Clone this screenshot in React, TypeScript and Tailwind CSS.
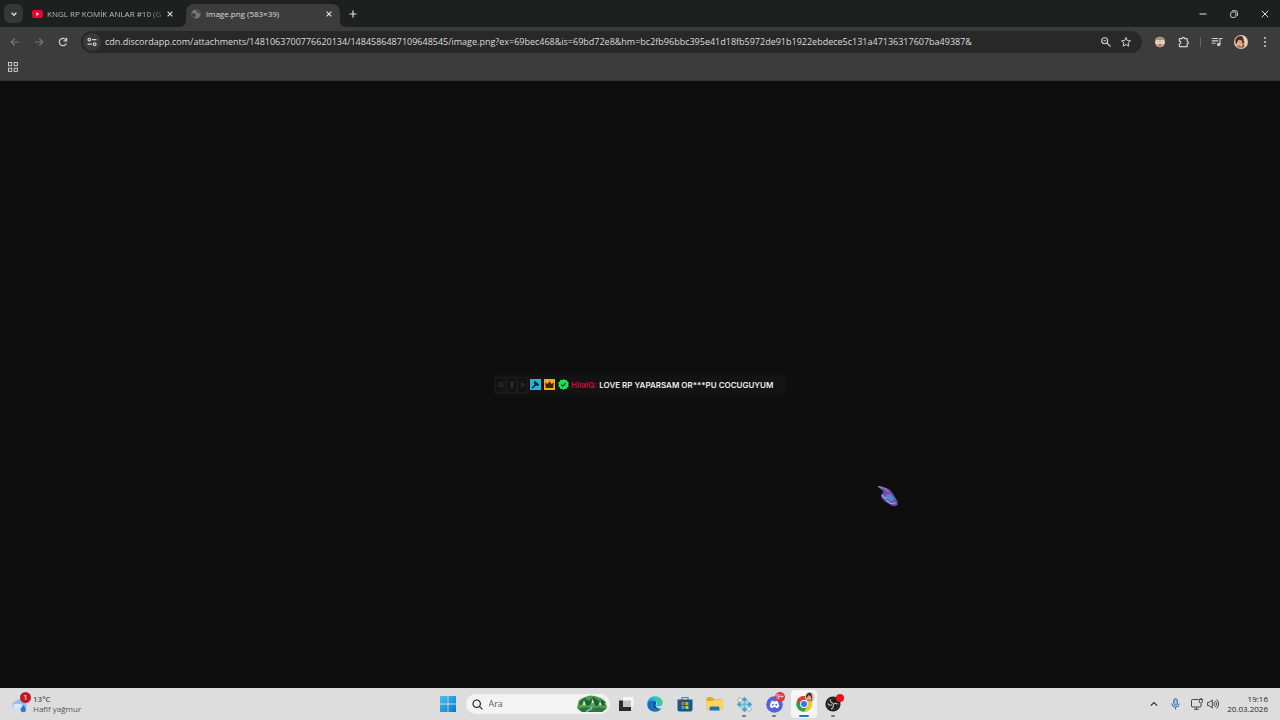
import type { ReactNode } from "react";

const url =
  "cdn.discordapp.com/attachments/1481063700776620134/1484586487109648545/image.png?ex=69bec468&is=69bd72e8&hm=bc2fb96bbc395e41d18fb5972de91b1922ebdece5c131a47136317607ba49387&";

const CloseIcon = () => (
  <svg viewBox="0 0 10 10" className="size-2.5" fill="none" stroke="currentColor" strokeWidth="1.2">
    <path d="M2.6 2.6l4.8 4.8M7.4 2.6l-4.8 4.8" />
  </svg>
);

const TabFoot = ({ className = "" }: { className?: string }) => (
  <svg viewBox="0 0 6 6" className={`size-1.5 shrink-0 ${className}`}>
    <path d="M0 0a6 6 0 0 0 6 6H0z" fill="#3c3c3c" />
  </svg>
);

const IconButton = ({ label, className = "", children }: { label: string; className?: string; children: ReactNode }) => (
  <button aria-label={label} className={`flex size-5 shrink-0 items-center justify-center rounded-full ${className}`}>
    {children}
  </button>
);

const TabStrip = () => (
  <div className="flex h-[27px] items-end bg-[#1e201f] text-[#dedede]">
    <button aria-label="Search tabs" className="mb-1 ml-1 flex size-[19px] items-center justify-center rounded-md bg-[#363837]">
      <svg viewBox="0 0 10 10" className="size-2.5" fill="none" stroke="currentColor" strokeWidth="1.4">
        <path d="M2.6 3.8L5 6.2l2.4-2.4" />
      </svg>
    </button>
    <div className="flex h-[27px] w-[157px] items-center pl-[9px]">
      <svg viewBox="0 0 11 8" className="h-2 w-[11px] shrink-0">
        <rect width="11" height="8" rx="2" fill="#f0002f" />
        <path d="M4.3 2.3v3.4L7.3 4z" fill="#fff" />
      </svg>
      <span className="ml-1 w-[118px] shrink-0 bg-gradient-to-r from-[#c8c8c8] from-85% to-[#444] bg-clip-text whitespace-nowrap text-transparent">
        KNGL RP KOMİK ANLAR #10 (G
      </span>
      <button aria-label="Close tab" className="text-[#d8d8d8]">
        <CloseIcon />
      </button>
    </div>
    <TabFoot className="-scale-x-100" />
    <div className="flex h-[23px] w-[154px] items-center rounded-t-lg bg-[#3c3c3c] pr-1.5 pb-1 pl-[5px]">
      <svg viewBox="0 0 10 10" className="size-2.5 shrink-0">
        <circle cx="5" cy="5" r="4.6" fill="#777" />
        <path d="M1 4.5c2-.6 2.4.4 3.4.8 1 .5.4 1.6-.3 2.2L3.4 9C1.6 8 .8 6.5 1 4.5zM5 .9c-.6 1 .3 1.3 1 1.6.8.3.2 1.3 1.2 1.7.8.3 1.4-.1 2 .3C9 2.5 7.3.9 5 .9z" fill="#3c3c3c" />
      </svg>
      <span className="ml-[5px] flex-1 whitespace-nowrap">image.png (583×39)</span>
      <button aria-label="Close tab">
        <CloseIcon />
      </button>
    </div>
    <TabFoot />
    <button aria-label="New tab" className="mb-2 ml-0.5">
      <svg viewBox="0 0 10 10" className="size-2.5" fill="none" stroke="currentColor" strokeWidth="1.2">
        <path d="M5 1.5v7M1.5 5h7" />
      </svg>
    </button>
    <div className="mb-2 ml-auto flex gap-[21px] pr-2.5">
      <button aria-label="Minimize">
        <svg viewBox="0 0 10 10" className="size-2.5" fill="none" stroke="currentColor">
          <path d="M1.500 5h7" />
        </svg>
      </button>
      <button aria-label="Restore">
        <svg viewBox="0 0 10 10" className="size-2.5" fill="none" stroke="currentColor" strokeWidth=".9">
          <rect x="1.7" y="3" width="5.2" height="5.4" rx="1.2" />
          <path d="M3.3 1.7h3.2a1.9 1.9 0 0 1 1.9 1.9V7" />
        </svg>
      </button>
      <button aria-label="Close window">
        <svg viewBox="0 0 10 10" className="size-2.5" fill="none" stroke="currentColor">
          <path d="M1.8 1.8l6.4 6.4M8.2 1.8L1.8 8.2" />
        </svg>
      </button>
    </div>
  </div>
);

const Toolbar = () => (
  <div className="flex h-[29px] items-center bg-[#3c3c3c] text-[#cfcfcf]">
    <div className="flex w-[81px] shrink-0 gap-1 pl-[5px]">
      <IconButton label="Back" className="text-[#777]">
        <svg viewBox="0 0 12 12" className="size-3" fill="none" stroke="currentColor" strokeWidth="1.2">
          <path d="M10.2 6H2.2M5.7 2.5L2.2 6l3.5 3.5" />
        </svg>
      </IconButton>
      <IconButton label="Forward" className="text-[#777]">
        <svg viewBox="0 0 12 12" className="size-3" fill="none" stroke="currentColor" strokeWidth="1.2">
          <path d="M1.8 6h8M6.3 2.5L9.8 6 6.3 9.5" />
        </svg>
      </IconButton>
      <IconButton label="Reload">
        <svg viewBox="0 0 12 12" className="size-3" fill="none" stroke="currentColor" strokeWidth="1.2">
          <path d="M9.4 7.5A3.7 3.7 0 1 1 9 3.8" />
          <path d="M9.6 1.8v3H6.6" />
        </svg>
      </IconButton>
    </div>
    <div className="flex h-[22px] flex-1 items-center rounded-full bg-[#282828] pr-1.5 pl-0.5">
      <IconButton label="View site information" className="!size-[18px] bg-[#3a3a3a]">
        <svg viewBox="0 0 12 12" className="size-3" fill="none" stroke="currentColor" strokeWidth="1.2">
          <circle cx="3.3" cy="3.6" r="1.3" />
          <path d="M6 3.6h4.5M1.500 8.2H6" />
          <circle cx="8.7" cy="8.2" r="1.3" />
        </svg>
      </IconButton>
      <input aria-label="Address" defaultValue={url} className="ml-1 min-w-0 flex-1 bg-transparent text-[9px] text-[#dcdcdc] outline-none" />
      <IconButton label="Zoom">
        <svg viewBox="0 0 12 12" className="size-3" fill="none" stroke="currentColor" strokeWidth="1.1">
          <circle cx="4.7" cy="4.7" r="3" />
          <path d="M7 7l3.6 3.6M3.4 4.7H6" />
        </svg>
      </IconButton>
      <IconButton label="Bookmark this tab">
        <svg viewBox="0 0 12 12" className="size-3" fill="none" stroke="currentColor" strokeWidth="1">
          <path d="M6 1.5l1.3 3 3.2.3L8.1 7l.7 3.2L6 8.5l-2.8 1.7L3.9 7 1.5 4.8l3.2-.3z" />
        </svg>
      </IconButton>
    </div>
    <div className="flex items-center gap-1 pr-[5px] pl-2">
      <IconButton label="Extension">
        <svg viewBox="0 0 12 12" className="size-3">
          <circle cx="6" cy="6" r="5.2" fill="#c9a78b" />
          <path d="M1 5C1 2 3.2.7 6 .7S11 2 11 5L9 4H3z" fill="#a99160" />
          <circle cx="3.7" cy="6" r="1.9" fill="#e8eeee" />
          <circle cx="8.3" cy="6" r="1.9" fill="#e8eeee" />
          <path d="M3.2 6h1M7.8 6h1" stroke="#445" strokeWidth=".8" />
          <path d="M4.2 9.3h3.6" stroke="#b5574e" />
        </svg>
      </IconButton>
      <IconButton label="Extensions">
        <svg viewBox="0 0 12 12" className="size-3" fill="none" stroke="currentColor" strokeWidth="1.2">
          <path d="M1.4 2.6h2.7a1.2 1.2 0 0 1 2.4 0h2.7v2.7a1.2 1.2 0 0 1 0 2.4v2.9H1.4V8a1.4 1.4 0 0 0 0-2.8z" strokeLinejoin="round" />
        </svg>
      </IconButton>
      <span className="mx-0.5 h-2.5 w-px bg-[#666]" />
      <IconButton label="Media controls">
        <svg viewBox="0 0 12 12" className="size-3" fill="none" stroke="currentColor" strokeWidth="1.1">
          <path d="M.8 2.5h6.4M.8 4.9h6.4M.8 7.3h3.7M9 8.5V2.5h2.5" />
          <circle cx="7.7" cy="8.5" r="1.2" fill="currentColor" />
        </svg>
      </IconButton>
      <IconButton label="Profile">
        <Portrait className="size-[14px]" />
      </IconButton>
      <IconButton label="Menu">
        <svg viewBox="0 0 12 12" className="size-3" fill="currentColor">
          <circle cx="6" cy="2" r="1" />
          <circle cx="6" cy="6" r="1" />
          <circle cx="6" cy="10" r="1" />
        </svg>
      </IconButton>
    </div>
  </div>
);

const Portrait = ({ className }: { className: string }) => (
  <svg viewBox="0 0 14 14" className={className}>
    <circle cx="7" cy="7" r="7" fill="#e9cdb3" />
    <path d="M2 3.5C4 .4 8 .3 9 2.5c1 2 .3 3.6 1.6 5L8.8 9 7.5 5.5 4.3 5 2.5 9.5C1 8 1 5 2 3.5z" fill="#4b2f28" />
    <path d="M4.3 5l2.8.4.9 3-1.7 1.4L4.5 8z" fill="#d9a17c" />
    <path d="M3.4 9.5l2.4.4 2 1 2-2.4 1.2 2.7C9.5 14 4.5 14 2.6 11.6z" fill="#b77b5e" />
    <path d="M7.9 8.2l1.6 1.4-1.2 2" stroke="#5b332a" strokeWidth=".9" fill="none" />
  </svg>
);

const BookmarksBar = () => (
  <div className="flex h-[25px] items-center border-b border-[#333] bg-[#3c3c3c] pb-0.5 pl-2 text-[#c6c6c6]">
    <button aria-label="Apps">
      <svg viewBox="0 0 10 10" className="size-2.5" fill="none" stroke="currentColor" strokeWidth="1">
        <rect x=".5" y=".5" width="3.2" height="3.2" />
        <rect x="6.2" y=".5" width="3.2" height="3.2" />
        <rect x=".5" y="6.2" width="3.2" height="3.2" />
        <rect x="6.2" y="6.2" width="3.2" height="3.2" />
      </svg>
    </button>
  </div>
);

const ChatMessage = () => (
  <div className="flex h-5 w-[292px] items-center rounded-xs bg-[#131313] pl-px font-['Inter',sans-serif] text-[8px]">
    <div className="flex text-[#454545]">
      <span className="flex h-4 w-[11px] items-center justify-center border border-[#1b1b1b]">
        <svg viewBox="0 0 8 8" className="size-1.5" fill="none" stroke="currentColor">
          <path d="M6.5 2A3 3 0 1 0 7 4H4" />
        </svg>
      </span>
      <span className="flex h-4 w-[11px] items-center justify-center border border-[#1b1b1b]">
        <svg viewBox="0 0 8 8" className="size-1.5" fill="none" stroke="currentColor">
          <path d="M1.5 1h5M4 1v6M2 7h4M2.5 3.5h3" />
        </svg>
      </span>
      <span className="flex h-4 w-[11px] items-center justify-center border border-[#1b1b1b]">
        <svg viewBox="0 0 8 8" className="size-1.5" fill="none" stroke="currentColor">
          <path d="M2 1l5 5M4 4L1 7M2 1v3" />
        </svg>
      </span>
    </div>
    <div className="ml-0.5 flex gap-[3px]">
      <svg viewBox="0 0 11 11" className="size-[11px]">
        <rect width="11" height="11" fill="#28b2de" />
        <path d="M4.6 1.8l4.6 3.7-1.5 1.8-1.6-1-3.3 3.3-1.3-1.2 3.2-3-.9-1.5z" fill="#09242e" />
      </svg>
      <svg viewBox="0 0 11 11" className="size-[11px]">
        <rect width="11" height="11" fill="#f8ab16" />
        <path d="M1.2 3.4l2.2 1.6 2.1-2.8L7.6 5l2.2-1.6-.6 5.6H1.8z" fill="#3b2202" />
      </svg>
      <svg viewBox="0 0 11 11" className="size-[11px]">
        <path d="M5.5 0l1.4 1.1 1.8-.2.6 1.7 1.5 1-.5 1.9.5 1.7-1.5 1-.6 1.7-1.8-.1L5.5 11 4.1 9.8l-1.8.1-.6-1.7-1.5-1 .5-1.7-.5-1.9 1.5-1L2.3.9l1.8.2z" fill="#22de52" />
        <path d="M3.3 5.7l1.500 1.5 2.9-3.1" fill="none" stroke="#0c4c1e" strokeWidth="1.2" />
      </svg>
    </div>
    <p className="ml-0.5 whitespace-nowrap text-[#ececec]">
      <b className="font-bold text-[#c00737]">HilalQ:</b> <span className="font-semibold">LOVE RP YAPARSAM OR***PU COCUGUYUM</span>
    </p>
  </div>
);

const Cursor = () => (
  <svg viewBox="0 0 22 22" className="absolute top-[404px] left-[68.5%] size-[22px]">
    <path d="M1 1.5c2-1 4 0 6 .7l3 1c3 1 5 4 7 7.300 1.600 2.600 4 6 3.700 8.500-.4 2.500-4.700 2.800-7.500.8-2-1.400-4-2-6-4C5.500 14 3.500 12.500 4 10.500l1-2 1.500-1.700C5 5 2.500 4 1 1.500z" fill="#6055a8" />
    <path d="M1.500 3l5 3.300L4.800 8.800 3 7z" fill="#0e0e0e" />
    <path d="M1 1.500l7.500 2.300 3 3.800" fill="none" stroke="#8f83bd" strokeWidth="1.200" />
    <path d="M8.500 4.500l5.500 6.500-3-.7-3-3.500z" fill="#b326bd" />
    <path d="M9 9.500l5-.500 3.500 5-3 2.500-4.500-3z" fill="#4c8ad2" />
    <path d="M5 10l3.500 3.500 1-1.500M9.500 15l4 3.500 5-.5" fill="none" stroke="#a3a0e6" strokeWidth="1.200" />
  </svg>
);

const TaskButton = ({ label, active, running, children }: { label: string; active?: boolean; running?: boolean; children: ReactNode }) => (
  <button
    aria-label={label}
    className={`relative flex h-7 w-[26px] items-center justify-center rounded-sm ${active ? "bg-[#f5f5f5]" : ""}`}
  >
    {children}
    {active && <span className="absolute bottom-px h-0.5 w-2.5 rounded-full bg-[#1a78c2]" />}
    {running && <span className="absolute bottom-px h-0.5 w-1 rounded-full bg-[#777]" />}
  </button>
);

const Taskbar = () => (
  <footer className="flex h-8 items-center justify-between bg-[#dddddd] text-[8px] leading-[10px] text-[#252525]">
    <button className="flex flex-1 items-center gap-1 pl-3 text-left">
      <span className="relative">
        <svg viewBox="0 0 17 17" className="size-[17px]">
          <path d="M4 12.500a3.500 3.500 0 0 1 0-7C5 2.500 10 2 11.500 6c4 0 4.500 6.500.5 6.500z" fill="#8fbdf0" />
          <path d="M3.500 12.500C1 12 .5 9 3 8c2-.6 3 0 5 0 3 0 5 4.500 2 4.500z" fill="#d8e9fb" />
          <path d="M11.300 9c1.500 2 2.700 3 2.700 4.500a2.700 2.700 0 0 1-5.400 0C8.600 12 9.800 11 11.300 9z" fill="#2a7ad8" />
        </svg>
        <span className="absolute -top-1 left-2 flex size-[11px] items-center justify-center rounded-full bg-[#c01925] text-[8px] text-white">1</span>
      </span>
      <span>
        13°C
        <span className="block text-[#555]">Hafif yağmur</span>
      </span>
    </button>
    <div className="flex items-center">
      <button aria-label="Start" className="flex w-8 items-center pl-1.5">
        <svg viewBox="0 0 16 16" className="size-4">
          <defs>
            <linearGradient id="start" x1="0" y1="0" x2="1" y2="1">
              <stop stopColor="#47c3ef" />
              <stop offset="1" stopColor="#0875c9" />
            </linearGradient>
          </defs>
          <path d="M0 0h7.600v7.600H0zM8.400 0H16v7.600H8.400zM0 8.400h7.600V16H0zM8.400 8.400H16V16H8.400z" fill="url(#start)" />
        </svg>
      </button>
      <label className="flex h-5 w-36 items-center rounded-full bg-[#f3f3f3] pr-0.5 pl-1.5">
        <svg viewBox="0 0 11 11" className="size-[11px] shrink-0" fill="none" stroke="#222" strokeWidth="1.2">
          <circle cx="4.7" cy="4.7" r="3.7" />
          <path d="M7.4 7.4l3 3" />
        </svg>
        <input aria-label="Ara" placeholder="Ara" className="ml-1.5 min-w-0 flex-1 bg-transparent text-[9px] outline-none placeholder:text-[#606060]" />
        <svg viewBox="0 0 32 18" className="h-[18px] w-8 shrink-0">
          <path d="M1 13L3 5l6-3 5-1.500L19 1l6 2 5 4 1 6-5 4H6z" fill="#4a9a50" />
          <path d="M3 8l5-5 5 3 4-4 6 4 4-1 3 5-8 1-9-1-7 2z" fill="#226034" />
          <path d="M8 5l3 7H4zM16.500 3.500l3 8h-6zM24 6l3 7h-6z" fill="#5fa65c" />
          <path d="M8 5l1.500 5H7zM16.500 3.500L18 8h-2zM24 6l1.500 4H23z" fill="#d5ecd9" />
          <path d="M2 14l7-2 7 2 7-2 7 2-4 3H6z" fill="#2d773e" />
          <path d="M11 17c-1-2 6-2 4-5" stroke="#7bd0db" strokeWidth="1.5" fill="none" />
          <path d="M27 3l2 1M29 8l1 2M4 4l2-1" stroke="#e6d48a" />
        </svg>
      </label>
      <div className="ml-[3px] flex w-[234px] justify-between">
        <TaskButton label="Task view">
          <svg viewBox="0 0 16 16" className="size-4">
            <path d="M5 1h10.500v10H5z" fill="#f6f6f6" />
            <path d="M1 4.500h4V11h8v4H1z" fill="#2a2a2a" />
            <path d="M5 4.500h8V11H5z" fill="#c3c3c3" />
          </svg>
        </TaskButton>
        <TaskButton label="Edge">
          <svg viewBox="0 0 16 16" className="size-4">
            <defs>
              <linearGradient id="edge" x1="0" y1=".4" x2="1" y2=".2">
                <stop stopColor="#209fe0" />
                <stop offset=".55" stopColor="#2fbfd0" />
                <stop offset="1" stopColor="#5bd04c" />
              </linearGradient>
            </defs>
            <path d="M.2 8C.2 3.500 4 .2 8.200.2c4.400 0 7.600 3.100 7.600 6.300 0 2.500-2 4-4.300 4-2 0-2.600-.8-2.300-1.400.6-.6.800-1.200.6-2C9.200 5 2 3.400.2 8z" fill="url(#edge)" />
            <path d="M.2 8c1-3.500 5-4 7.700-3-2.400 1.200-3 4-1.500 6.500 1.600 2.500 5 3.300 8 1C12 16 8 16.500 4.500 15 1.500 13.700.2 11 .2 8z" fill="#126fbd" />
            <path d="M7.900 5c-2.400 1.200-3 4-1.500 6.500 1.600 2.500 5 3.300 8 1-3 .7-6.200-1-5.700-4 .3-1.500 1-2.800-.8-3.500z" fill="#0a4e95" />
          </svg>
        </TaskButton>
        <TaskButton label="Microsoft Store">
          <svg viewBox="0 0 16 16" className="size-4">
            <path d="M5 4V1.500h6V4" fill="none" stroke="#2b8fd0" strokeWidth="1.2" />
            <path d="M.5 3.500h15v10a2 2 0 0 1-2 2h-11a2 2 0 0 1-2-2z" fill="#19568c" />
            <path d="M4.500 6h3v3h-3z" fill="#ef5a3c" />
            <path d="M8.400 6h3v3h-3z" fill="#89c840" />
            <path d="M4.500 9.900h3v3h-3z" fill="#31a9ec" />
            <path d="M8.400 9.900h3v3h-3z" fill="#fac02e" />
          </svg>
        </TaskButton>
        <TaskButton label="File Explorer">
          <svg viewBox="0 0 17 16" className="h-4 w-[17px]">
            <path d="M.5 2.500A1.500 1.500 0 0 1 2 1h4l2 2h7a1.500 1.500 0 0 1 1.500 1.500V13a1 1 0 0 1-1 1h-14a1 1 0 0 1-1-1z" fill="#e9a821" />
            <path d="M.5 5h6L8 3.500h8.500V13a1 1 0 0 1-1 1h-14a1 1 0 0 1-1-1z" fill="#fcd45c" />
            <path d="M3.500 14.500V12a1.500 1.500 0 0 1 1.500-1.500h7a1.500 1.500 0 0 1 1.500 1.500v2.500z" fill="#1b75b8" />
          </svg>
        </TaskButton>
        <TaskButton label="Network tool" running>
          <svg viewBox="0 0 17 17" className="size-[17px]" fill="#3fa6d3">
            <path d="M8.500.8l2.700 2.700-2.700 2.700-2.700-2.700zM8.500 10.800l2.700 2.700-2.700 2.700-2.700-2.700zM3.500 5.800l2.700 2.700-2.700 2.700L.8 8.500zM13.500 5.800l2.700 2.700-2.700 2.700-2.700-2.700z" />
            <path d="M8.500 6.500l2 2-2 2-2-2z" fill="#2c86b6" />
            <path d="M4.500 12.500l8-8M6.500 6.500l4 4" stroke="#7cc3e0" strokeWidth="1.2" />
            <circle cx="4" cy="4" r="2.200" fill="#eef3f5" stroke="#8a9aa2" strokeWidth=".8" />
            <circle cx="13" cy="13" r="2.200" fill="#eef3f5" stroke="#8a9aa2" strokeWidth=".8" />
          </svg>
        </TaskButton>
        <TaskButton label="Discord" running>
          <svg viewBox="0 0 17 17" className="size-[17px]">
            <circle cx="8.5" cy="8.5" r="8.3" fill="#5463dd" />
            <path d="M5.800 5l1.200-.4.500.8h2l.5-.8 1.200.4c1.500 2 2 4 1.700 6-1 .8-1.700 1-2.500 1.200l-.7-1c.5-.1.800-.3 1-.5-1.400.6-3 .6-4.400 0l1 .5-.7 1c-.8-.2-1.500-.4-2.500-1.200-.3-2 .2-4 1.700-6z" fill="#fff" />
            <ellipse cx="6.8" cy="8.7" rx=".9" ry="1" fill="#5463dd" />
            <ellipse cx="10.2" cy="8.7" rx=".9" ry="1" fill="#5463dd" />
          </svg>
          <span className="absolute top-0.5 right-0.5 flex size-2.5 items-center justify-center rounded-full bg-[#dc3545] text-[7px] text-white">9+</span>
        </TaskButton>
        <TaskButton label="Chrome" active>
          <svg viewBox="0 0 16 16" className="size-4">
            <circle cx="8" cy="8" r="7.8" fill="#2ba24c" />
            <path d="M1.200 4.100a7.800 7.800 0 0 1 13.600 0H8a4 4 0 0 0-3.500 6z" fill="#e23b30" />
            <path d="M14.800 4.100A7.800 7.800 0 0 1 7.900 15.800L11.500 10A4 4 0 0 0 8 4.100z" fill="#fbc61c" />
            <circle cx="8" cy="8" r="3.9" fill="#fff" />
            <circle cx="8" cy="8" r="3" fill="#2d7be8" />
          </svg>
          <span className="absolute top-0.5 right-0.5">
            <Portrait className="size-2.5" />
          </span>
        </TaskButton>
        <TaskButton label="OBS Studio" running>
          <svg viewBox="0 0 16 16" className="size-4">
            <circle cx="8" cy="8" r="7.6" fill="#1c1c1e" />
            <circle cx="8" cy="8" r="5.7" fill="none" stroke="#39393b" strokeWidth="1" />
            <path d="M5.500 3.500c-.6 2 .8 3.300 2.500 3.800M12.400 8.300c-1.500-1.400-3.400-1-4.400.5M6 12.800c2-.4 2.800-2.200 2.200-4M3 7.500c.7 1.800 2.500 2.200 4 1.300" stroke="#bbb" fill="none" strokeWidth="1.2" />
          </svg>
          <span className="absolute top-1 right-0.5 size-2 rounded-full bg-[#ee1018]" />
        </TaskButton>
      </div>
    </div>
    <div className="flex flex-1 items-center justify-end pr-3">
      <button aria-label="Show hidden icons">
        <svg viewBox="0 0 10 10" className="size-2.5" fill="none" stroke="#333" strokeWidth="1.2">
          <path d="M1.8 6.7L5 3.500l3.200 3.200" />
        </svg>
      </button>
      <button aria-label="Microphone" className="ml-[11px]">
        <svg viewBox="0 0 11 12" className="h-3 w-[11px]" fill="none" stroke="#2f69a8" strokeWidth="1">
          <rect x="3.7" y=".8" width="3.6" height="6.4" rx="1.8" fill="#9cc0e4" />
          <path d="M1.8 5.500a3.700 3.700 0 0 0 7.400 0M5.500 9.200v2.200" />
        </svg>
      </button>
      <button aria-label="Network and volume" className="ml-2.5 flex gap-1">
        <svg viewBox="0 0 12 12" className="size-3" fill="none" stroke="#333" strokeWidth=".9">
          <path d="M7.500 1.500H1.500a1 1 0 0 0-1 1v5.500a1 1 0 0 0 1 1h7.500a1 1 0 0 0 1-1V6M5.300 9v2M3 11.300h4.800" />
          <path d="M8.400 1.500h3v2.200a1.500 1.500 0 0 1-3 0zM9.200.2v1.300M10.600.2v1.300" />
        </svg>
        <svg viewBox="0 0 12 12" className="size-3" fill="none" stroke="#333" strokeWidth=".9">
          <path d="M.6 4.300v3.400h1.900L5.300 10V2L2.500 4.300zM6.800 4.300a2.500 2.500 0 0 1 0 3.400M8.200 2.900a4.400 4.400 0 0 1 0 6.200M9.700 1.500a6.400 6.400 0 0 1 0 9" />
        </svg>
      </button>
      <button className="ml-2 text-right">
        19:16
        <span className="block">20.03.2026</span>
      </button>
    </div>
  </footer>
);

export default function App() {
  return (
    <div className="flex min-h-screen flex-col bg-[#0e0e0e] font-['Open_Sans','Noto_Sans',sans-serif] text-[8px]">
      <header>
        <TabStrip />
        <Toolbar />
        <BookmarksBar />
      </header>
      <main className="relative flex flex-1 items-center justify-center">
        <ChatMessage />
        <Cursor />
      </main>
      <Taskbar />
    </div>
  );
}
